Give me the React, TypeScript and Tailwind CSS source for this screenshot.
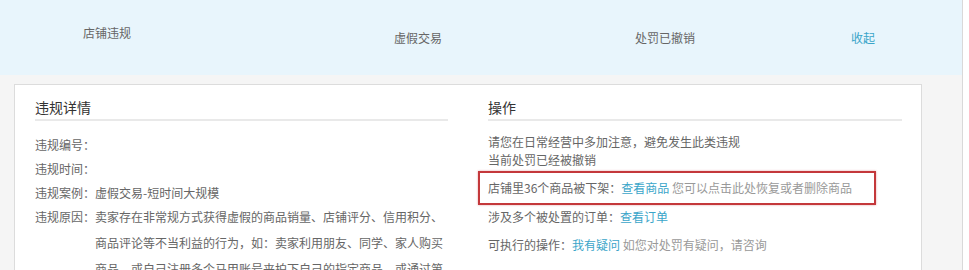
export default function App() {
  return (
    <div className="h-[270px] w-[969px] overflow-hidden bg-white font-['Noto_Sans_CJK_SC','Noto_Sans',sans-serif] text-[12px] text-[#666]">
      <div className="h-[270px] w-[963px] border-r border-[#d9d9d9] bg-[#f5f5f5]">
        {/* summary band */}
        <div className="flex h-[75px] items-center bg-[#e8f5fc] pl-[83px]">
          <span className="mb-[10px] w-[311px]">店铺违规</span>
          <span className="w-[241px]">虚假交易</span>
          <span className="w-[216px]">处罚已撤销</span>
          <span className="cursor-pointer text-[#3aa5c9]">收起</span>
        </div>

        <div className="ml-[14px] mt-[9px] flex h-[200px] w-[908px] gap-[40px] border border-[#dcdcdc] bg-white pl-[20px] pt-[12px]">
          {/* left column */}
          <div className="w-[413px]">
            <h3 className="border-b-2 border-[#e9e9e9] pb-[2px] text-[14px] leading-[20px] text-[#333]">违规详情</h3>
            <div className="mt-[12px]">
              <div className="leading-[24px]">违规编号：</div>
              <div className="leading-[24px]">违规时间：</div>
              <div className="leading-[24px]">违规案例：虚假交易-短时间大规模</div>
              <div className="-mt-[1px] flex leading-[26px]">
                <span className="w-[60px] shrink-0">违规原因：</span>
                <p>
                  卖家存在非常规方式获得虚假的商品销量、店铺评分、信用积分、
                  <br />
                  商品评论等不当利益的行为，如：卖家利用朋友、同学、家人购买
                  <br />
                  商品，或自己注册多个马甲账号来拍下自己的指定商品，或通过第
                </p>
              </div>
            </div>
          </div>

          {/* right column */}
          <div className="w-[414px]">
            <h3 className="border-b-2 border-[#e9e9e9] pb-[2px] text-[14px] leading-[20px] text-[#333]">操作</h3>
            <div className="mt-[12px] leading-[18px]">
              <div>请您在日常经营中多加注意，避免发生此类违规</div>
              <div>当前处罚已经被撤销</div>
            </div>
            <div className="-ml-[10px] mt-[2px] h-[34px] w-[398px] border-2 border-[#c4383b] pl-[8px] leading-[30px] shadow-[0_0_2px_rgba(196,56,59,0.45)]">
              店铺里36个商品被下架：<span className="text-[#3aa5c9]">查看商品</span>{' '}
              <span className="text-[#999]">您可以点击此处恢复或者删除商品</span>
            </div>
            <div className="leading-[24px]">
              涉及多个被处置的订单：<span className="text-[#3aa5c9]">查看订单</span>
            </div>
            <div className="mt-[4px] leading-[24px]">
              可执行的操作：<span className="text-[#3aa5c9]">我有疑问</span>{' '}
              <span className="text-[#999]">如您对处罚有疑问，请咨询</span>
            </div>
          </div>
        </div>
      </div>
    </div>
  );
}
